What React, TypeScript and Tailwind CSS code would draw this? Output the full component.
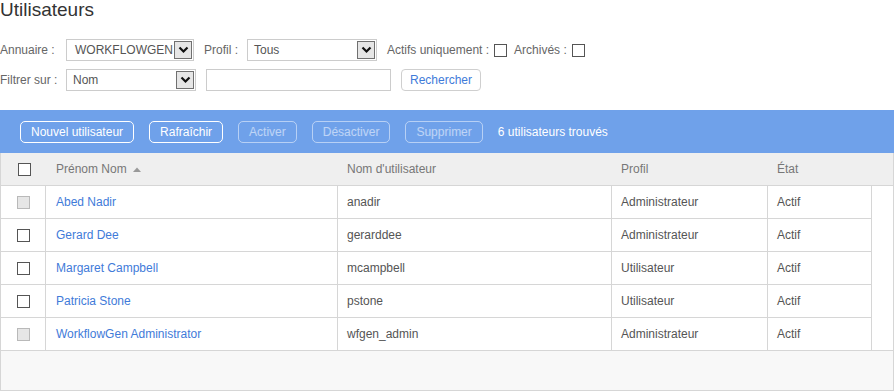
import React from "react";

type User = {
  name: string;
  login: string;
  profile: string;
  state: string;
  locked?: boolean;
};

const USERS: User[] = [
  { name: "Abed Nadir", login: "anadir", profile: "Administrateur", state: "Actif", locked: true },
  { name: "Gerard Dee", login: "gerarddee", profile: "Administrateur", state: "Actif" },
  { name: "Margaret Campbell", login: "mcampbell", profile: "Utilisateur", state: "Actif" },
  { name: "Patricia Stone", login: "pstone", profile: "Utilisateur", state: "Actif" },
  { name: "WorkflowGen Administrator", login: "wfgen_admin", profile: "Administrateur", state: "Actif", locked: true },
];

function Box({ disabled }: { disabled?: boolean }) {
  return (
    <span
      className={[
        "block h-[13px] w-[13px] shrink-0 border",
        disabled ? "border-[#b9b9b9] bg-[#e6e6e6]" : "border-[#555] bg-white",
      ].join(" ")}
    />
  );
}

function Select({ value, width, pad = "pl-[7px]" }: { value: string; width: string; pad?: string }) {
  return (
    <div className={`flex h-[22px] items-center border border-[#cccccc] bg-white ${width}`}>
      <span className={`flex-1 truncate text-[#555] ${pad}`}>{value}</span>
      <span className="mr-px flex h-[18px] w-[18px] shrink-0 items-center justify-center border border-[#707070] bg-[#e6e6e6]">
        <svg width="11" height="8" viewBox="0 0 11 8">
          <path d="M1.5 1.5 L5.5 5.5 L9.5 1.5" fill="none" stroke="#111" strokeWidth="2.2" />
        </svg>
      </span>
    </div>
  );
}

function BarButton({ label, disabled }: { label: string; disabled?: boolean }) {
  return (
    <button
      type="button"
      className={[
        "h-[22px] rounded-[5px] border px-[10px] leading-[20px]",
        disabled ? "border-white/50 text-white/55" : "border-white text-white",
      ].join(" ")}
    >
      {label}
    </button>
  );
}

export default function App() {
  return (
    <div className="h-[392px] w-[894px] overflow-hidden bg-white font-['Liberation_Sans',Arial,sans-serif] text-[12px] text-[#555]">
      <h1 className="h-[20px] text-[19px] leading-[20px] text-[#333]">Utilisateurs</h1>

      <div className="mt-[19px] flex h-[22px] items-center">
        <span className="w-[66px] text-[#666]">Annuaire :</span>
        <Select value="WORKFLOWGEN" width="w-[128px]" pad="pl-[8px]" />
        <span className="ml-[10px] text-[#666]">Profil :</span>
        <div className="ml-[9px]">
          <Select value="Tous" width="w-[130px]" pad="pl-[6px]" />
        </div>
        <span className="ml-[10px] text-[#666]">Actifs uniquement :</span>
        <span className="ml-[5px]">
          <Box />
        </span>
        <span className="ml-[7px] text-[#666]">Archivés :</span>
        <span className="ml-[5px]">
          <Box />
        </span>
      </div>

      <div className="mt-[8px] flex h-[22px] items-center">
        <span className="w-[66px] text-[#666]">Filtrer sur :</span>
        <Select value="Nom" width="w-[130px]" pad="pl-[6px]" />
        <input
          type="text"
          className="ml-[10px] h-[22px] w-[185px] border border-[#cccccc] px-1 outline-none"
        />
        <button
          type="button"
          className="ml-[10px] h-[22px] w-[80px] rounded-[4px] border border-[#cfcfcf] bg-white text-[#3f7bd9]"
        >
          Rechercher
        </button>
      </div>

      <div className="mt-[19px] flex h-[43px] items-center gap-[15px] bg-[#6fa1ea] pl-[20px]">
        <BarButton label="Nouvel utilisateur" />
        <BarButton label="Rafraîchir" />
        <BarButton label="Activer" disabled />
        <BarButton label="Désactiver" disabled />
        <BarButton label="Supprimer" disabled />
        <span className="text-white">6 utilisateurs trouvés</span>
      </div>

      <div className="border-x border-b border-[#d6d6d6]">
        <div className="flex h-[33px] items-center border-b border-[#d6d6d6] bg-[#efefef] text-[#777]">
          <div className="flex w-[45px] justify-center pl-px">
            <Box />
          </div>
          <div className="flex w-[292px] items-center gap-[6px] pl-[10px]">
            Prénom Nom
            <svg width="8" height="5" viewBox="0 0 8 5">
              <path d="M0 5 L4 0.5 L8 5 Z" fill="#999" />
            </svg>
          </div>
          <div className="w-[274px] pl-[9px]">Nom d'utilisateur</div>
          <div className="w-[156px] pl-[9px]">Profil</div>
          <div className="flex-1 pl-[9px]">État</div>
        </div>

        <div className="flex">
          <div className="w-[871px] border-r border-[#d6d6d6]">
            {USERS.map((u) => (
              <div key={u.login} className="flex h-[33px] border-b border-[#d6d6d6]">
                <div className="flex w-[45px] items-center justify-center border-r border-[#d6d6d6] pl-px">
                  <Box disabled={u.locked} />
                </div>
                <div className="flex w-[292px] items-center border-r border-[#d6d6d6] pl-[10px] text-[#3f7bd9]">
                  {u.name}
                </div>
                <div className="flex w-[274px] items-center border-r border-[#d6d6d6] pl-[9px]">
                  {u.login}
                </div>
                <div className="flex w-[156px] items-center border-r border-[#d6d6d6] pl-[9px]">
                  {u.profile}
                </div>
                <div className="flex flex-1 items-center pl-[9px]">{u.state}</div>
              </div>
            ))}
          </div>
          <div className="flex-1 border-b border-[#d6d6d6] bg-white" />
        </div>

        <div className="h-[39px] bg-[#f8f8f8]" />
      </div>
    </div>
  );
}
